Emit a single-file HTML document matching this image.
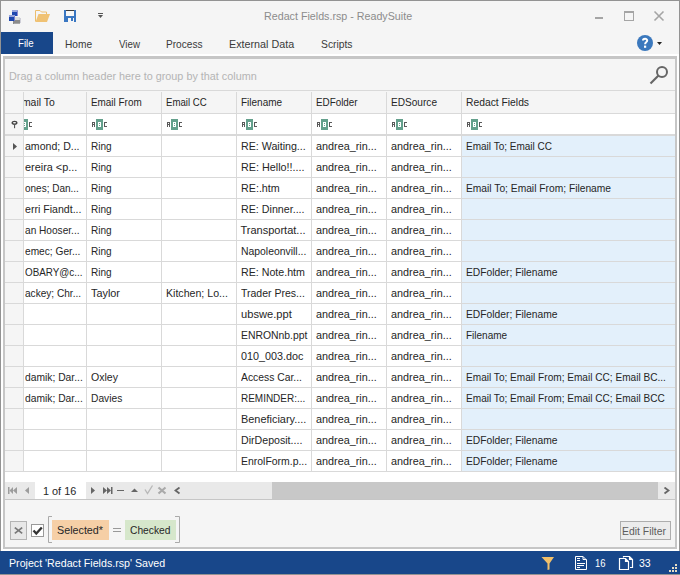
<!DOCTYPE html>
<html><head><meta charset="utf-8"><style>
*{margin:0;padding:0;box-sizing:border-box}
html,body{width:680px;height:575px;overflow:hidden;background:#f5f5f5;font-family:"Liberation Sans",sans-serif;font-size:11px;color:#262626}
.a{position:absolute;display:block}
.t{position:absolute;white-space:nowrap;line-height:13px;transform-origin:0 0}
</style></head>
<body>
<div class="a" style="left:0px;top:0px;width:680px;height:1px;background:#939393"></div>
<div class="a" style="left:0px;top:0px;width:1px;height:575px;background:#939393"></div>
<div class="a" style="left:679px;top:0px;width:1px;height:575px;background:#939393"></div>
<svg class="a" style="left:8px;top:9px" width="14" height="16" viewBox="0 0 14 16"><rect x="5" y="8" width="7" height="4" fill="#dcdcdc"/><rect x="11" y="9" width="2" height="5" fill="#cfcfd8"/><rect x="5" y="11" width="7" height="4" fill="#8c8c8c"/><rect x="6" y="14" width="6" height="1" fill="#a8a8a8"/><rect x="4" y="1" width="6" height="2" fill="#98a4dc"/><rect x="4" y="3" width="5" height="4" fill="#1f47b0"/><rect x="9" y="2" width="1" height="5" fill="#8a86d0"/><rect x="1" y="6" width="6" height="2" fill="#98a4dc"/><rect x="1" y="8" width="5" height="4" fill="#1c46ae"/><rect x="6" y="7" width="1" height="5" fill="#7c80cc"/></svg>
<svg class="a" style="left:35px;top:10px" width="16" height="13" viewBox="0 0 16 13"><path d="M0.5 11.5 V0.5 H5 L6.5 2 H11.5 V4" fill="none" stroke="#ecbd6c" stroke-width="1"/><path d="M0.5 12 L3.5 4 H15 L12 12Z" fill="#f0c274"/></svg>
<svg class="a" style="left:64px;top:10px" width="12" height="12" viewBox="0 0 12 12"><rect x="0" y="0" width="12" height="12" fill="#3a77c2"/><rect x="2" y="0" width="8" height="6" fill="#f7f7f7"/><rect x="2" y="0" width="8" height="1" fill="#3c3c3c"/><rect x="4" y="8" width="6" height="4" fill="#f7f7f7"/><rect x="7" y="8" width="2" height="3" fill="#3a77c2"/></svg>
<svg class="a" style="left:98px;top:13px" width="5" height="5" viewBox="0 0 5 5"><rect x="0" y="0" width="5" height="1" fill="#555"/><path d="M0 2 H5 L2.5 5Z" fill="#555"/></svg>
<div class="t" style="left:264px;top:10px;transform:scaleX(0.9729);color:#8c8c8c">Redact Fields.rsp - ReadySuite</div>
<div class="a" style="left:595px;top:17px;width:8px;height:2px;background:#a5a5a5"></div>
<div class="a" style="left:624px;top:11px;width:10px;height:10px;border:1px solid #a5a5a5;border-top-width:2px"></div>
<svg class="a" style="left:653px;top:10px" width="12" height="12" viewBox="0 0 12 12"><path d="M1.5 1.5 L10.5 10.5 M10.5 1.5 L1.5 10.5" stroke="#a5a5a5" stroke-width="1.6"/></svg>
<div class="a" style="left:1px;top:32px;width:52px;height:22px;background:#18478a"></div>
<div class="t" style="left:18px;top:37px;transform:scaleX(0.8803);color:#fff">File</div>
<div class="t" style="left:65px;top:38px;transform:scaleX(0.9239);color:#3a3a3a">Home</div>
<div class="t" style="left:119px;top:38px;transform:scaleX(0.8861);color:#3a3a3a">View</div>
<div class="t" style="left:166px;top:38px;transform:scaleX(0.9196);color:#3a3a3a">Process</div>
<div class="t" style="left:229px;top:38px;transform:scaleX(0.9774);color:#3a3a3a">External Data</div>
<div class="t" style="left:321px;top:38px;transform:scaleX(0.9379);color:#3a3a3a">Scripts</div>
<svg class="a" style="left:637px;top:35px" width="16" height="16" viewBox="0 0 16 16"><circle cx="8" cy="8" r="8" fill="#3b78bd"/><path d="M6 5.5 C6 3.3 10.2 3.2 10.2 5.5 C10.2 7.1 8.1 7.2 8.1 9.2" fill="none" stroke="#fff" stroke-width="2"/><rect x="7" y="10.6" width="2.2" height="2.2" fill="#fff"/></svg>
<svg class="a" style="left:657px;top:42px" width="5" height="3" viewBox="0 0 5 3"><path d="M0 0 H5 L2.5 3Z" fill="#222"/></svg>
<div class="a" style="left:1px;top:54px;width:678px;height:497px;background:#ffffff"></div>
<div class="a" style="left:3px;top:56px;width:674px;height:493px;background:#c6c6c6"></div>
<div class="a" style="left:5px;top:59px;width:670px;height:488px;background:#f5f5f5"></div>
<div class="t" style="left:9px;top:70px;transform:scaleX(0.9833);color:#b4b4b4">Drag a column header here to group by that column</div>
<svg class="a" style="left:648px;top:64px" width="22" height="22" viewBox="0 0 22 22"><circle cx="14" cy="8" r="5" fill="none" stroke="#666" stroke-width="2"/><path d="M10.5 11.5 L2.5 19.5" stroke="#666" stroke-width="2.2"/></svg>
<div class="a" style="left:5px;top:90px;width:670px;height:1px;background:#d9d9d9"></div>
<div class="a" style="left:5px;top:91px;width:670px;height:408px;overflow:hidden">
<div class="a" style="left:0px;top:0px;width:670px;height:22px;background:#f5f5f5"></div>
<div class="a" style="left:0px;top:22px;width:670px;height:1px;background:#d9d9d9"></div>
<div class="a" style="left:0px;top:23px;width:670px;height:20px;background:#fff"></div>
<div class="a" style="left:0px;top:23px;width:18px;height:20px;background:#f5f5f5"></div>
<div class="a" style="left:0px;top:43px;width:670px;height:2px;background:#d9d9d9"></div>
<div class="a" style="left:0px;top:45px;width:670px;height:346px;background:#fff"></div>
<div class="a" style="left:0px;top:45px;width:18px;height:336px;background:#f5f5f5"></div>
<div class="a" style="left:457px;top:45px;width:213px;height:336px;background:#e3f0fb"></div>
<div class="a" style="left:0px;top:65px;width:670px;height:1px;background:#d9d9d9"></div>
<div class="t" style="left:19.6px;top:49px;transform:scaleX(0.9595);">amond; D...</div>
<div class="t" style="left:85.5px;top:49px;transform:scaleX(0.9109);">Ring</div>
<div class="t" style="left:235.5px;top:49px;transform:scaleX(0.9689);">RE: Waiting...</div>
<div class="t" style="left:310.5px;top:49px;transform:scaleX(0.9837);">andrea_rin...</div>
<div class="t" style="left:385.5px;top:49px;transform:scaleX(0.9837);">andrea_rin...</div>
<div class="t" style="left:460.5px;top:49px;transform:scaleX(0.9104);">Email To; Email CC</div>
<div class="a" style="left:0px;top:86px;width:670px;height:1px;background:#d9d9d9"></div>
<div class="t" style="left:19.6px;top:70px;transform:scaleX(0.9899);">ereira &lt;p...</div>
<div class="t" style="left:85.5px;top:70px;transform:scaleX(0.9109);">Ring</div>
<div class="t" style="left:235.5px;top:70px;transform:scaleX(0.9808);">RE: Hello!!....</div>
<div class="t" style="left:310.5px;top:70px;transform:scaleX(0.9837);">andrea_rin...</div>
<div class="t" style="left:385.5px;top:70px;transform:scaleX(0.9837);">andrea_rin...</div>
<div class="a" style="left:0px;top:107px;width:670px;height:1px;background:#d9d9d9"></div>
<div class="t" style="left:19.6px;top:91px;transform:scaleX(0.9079);">ones; Dan...</div>
<div class="t" style="left:85.5px;top:91px;transform:scaleX(0.9109);">Ring</div>
<div class="t" style="left:235.5px;top:91px;transform:scaleX(0.9756);">RE:.htm</div>
<div class="t" style="left:310.5px;top:91px;transform:scaleX(0.9837);">andrea_rin...</div>
<div class="t" style="left:385.5px;top:91px;transform:scaleX(0.9837);">andrea_rin...</div>
<div class="t" style="left:460.5px;top:91px;transform:scaleX(0.9316);">Email To; Email From; Filename</div>
<div class="a" style="left:0px;top:128px;width:670px;height:1px;background:#d9d9d9"></div>
<div class="t" style="left:19.6px;top:112px;transform:scaleX(0.9620);">erri Fiandt...</div>
<div class="t" style="left:85.5px;top:112px;transform:scaleX(0.9109);">Ring</div>
<div class="t" style="left:235.5px;top:112px;transform:scaleX(0.9716);">RE: Dinner....</div>
<div class="t" style="left:310.5px;top:112px;transform:scaleX(0.9837);">andrea_rin...</div>
<div class="t" style="left:385.5px;top:112px;transform:scaleX(0.9837);">andrea_rin...</div>
<div class="a" style="left:0px;top:149px;width:670px;height:1px;background:#d9d9d9"></div>
<div class="t" style="left:19.6px;top:133px;transform:scaleX(0.9197);">an Hooser...</div>
<div class="t" style="left:85.5px;top:133px;transform:scaleX(0.9109);">Ring</div>
<div class="t" style="left:235.5px;top:133px;">Transportat...</div>
<div class="t" style="left:310.5px;top:133px;transform:scaleX(0.9837);">andrea_rin...</div>
<div class="t" style="left:385.5px;top:133px;transform:scaleX(0.9837);">andrea_rin...</div>
<div class="a" style="left:0px;top:170px;width:670px;height:1px;background:#d9d9d9"></div>
<div class="t" style="left:19.6px;top:154px;transform:scaleX(0.9239);">emec; Ger...</div>
<div class="t" style="left:85.5px;top:154px;transform:scaleX(0.9109);">Ring</div>
<div class="t" style="left:235.5px;top:154px;transform:scaleX(0.9459);">Napoleonvill...</div>
<div class="t" style="left:310.5px;top:154px;transform:scaleX(0.9837);">andrea_rin...</div>
<div class="t" style="left:385.5px;top:154px;transform:scaleX(0.9837);">andrea_rin...</div>
<div class="a" style="left:0px;top:191px;width:670px;height:1px;background:#d9d9d9"></div>
<div class="t" style="left:19.6px;top:175px;transform:scaleX(0.8956);">OBARY@c...</div>
<div class="t" style="left:85.5px;top:175px;transform:scaleX(0.9109);">Ring</div>
<div class="t" style="left:235.5px;top:175px;transform:scaleX(0.9687);">RE: Note.htm</div>
<div class="t" style="left:310.5px;top:175px;transform:scaleX(0.9837);">andrea_rin...</div>
<div class="t" style="left:385.5px;top:175px;transform:scaleX(0.9837);">andrea_rin...</div>
<div class="t" style="left:460.5px;top:175px;transform:scaleX(0.9356);">EDFolder; Filename</div>
<div class="a" style="left:0px;top:212px;width:670px;height:1px;background:#d9d9d9"></div>
<div class="t" style="left:19.6px;top:196px;transform:scaleX(0.9169);">ackey; Chr...</div>
<div class="t" style="left:85.5px;top:196px;transform:scaleX(0.9872);">Taylor</div>
<div class="t" style="left:160.5px;top:196px;transform:scaleX(0.9634);">Kitchen; Lo...</div>
<div class="t" style="left:235.5px;top:196px;transform:scaleX(0.9554);">Trader Pres...</div>
<div class="t" style="left:310.5px;top:196px;transform:scaleX(0.9837);">andrea_rin...</div>
<div class="t" style="left:385.5px;top:196px;transform:scaleX(0.9837);">andrea_rin...</div>
<div class="a" style="left:0px;top:233px;width:670px;height:1px;background:#d9d9d9"></div>
<div class="t" style="left:235.5px;top:217px;transform:scaleX(1.0122);">ubswe.ppt</div>
<div class="t" style="left:310.5px;top:217px;transform:scaleX(0.9837);">andrea_rin...</div>
<div class="t" style="left:385.5px;top:217px;transform:scaleX(0.9837);">andrea_rin...</div>
<div class="t" style="left:460.5px;top:217px;transform:scaleX(0.9356);">EDFolder; Filename</div>
<div class="a" style="left:0px;top:254px;width:670px;height:1px;background:#d9d9d9"></div>
<div class="t" style="left:235.5px;top:238px;transform:scaleX(0.9452);">ENRONnb.ppt</div>
<div class="t" style="left:310.5px;top:238px;transform:scaleX(0.9837);">andrea_rin...</div>
<div class="t" style="left:385.5px;top:238px;transform:scaleX(0.9837);">andrea_rin...</div>
<div class="t" style="left:460.5px;top:238px;transform:scaleX(0.9086);">Filename</div>
<div class="a" style="left:0px;top:275px;width:670px;height:1px;background:#d9d9d9"></div>
<div class="t" style="left:235.5px;top:259px;transform:scaleX(0.9795);">010_003.doc</div>
<div class="t" style="left:310.5px;top:259px;transform:scaleX(0.9837);">andrea_rin...</div>
<div class="t" style="left:385.5px;top:259px;transform:scaleX(0.9837);">andrea_rin...</div>
<div class="a" style="left:0px;top:296px;width:670px;height:1px;background:#d9d9d9"></div>
<div class="t" style="left:19.6px;top:280px;transform:scaleX(0.9354);">damik; Dar...</div>
<div class="t" style="left:85.5px;top:280px;transform:scaleX(0.9609);">Oxley</div>
<div class="t" style="left:235.5px;top:280px;transform:scaleX(0.9407);">Access Car...</div>
<div class="t" style="left:310.5px;top:280px;transform:scaleX(0.9837);">andrea_rin...</div>
<div class="t" style="left:385.5px;top:280px;transform:scaleX(0.9837);">andrea_rin...</div>
<div class="t" style="left:460.5px;top:280px;transform:scaleX(0.9168);">Email To; Email From; Email CC; Email BC...</div>
<div class="a" style="left:0px;top:317px;width:670px;height:1px;background:#d9d9d9"></div>
<div class="t" style="left:19.6px;top:301px;transform:scaleX(0.9354);">damik; Dar...</div>
<div class="t" style="left:85.5px;top:301px;transform:scaleX(0.9290);">Davies</div>
<div class="t" style="left:235.5px;top:301px;transform:scaleX(0.9063);">REMINDER:...</div>
<div class="t" style="left:310.5px;top:301px;transform:scaleX(0.9837);">andrea_rin...</div>
<div class="t" style="left:385.5px;top:301px;transform:scaleX(0.9837);">andrea_rin...</div>
<div class="t" style="left:460.5px;top:301px;transform:scaleX(0.9169);">Email To; Email From; Email CC; Email BCC</div>
<div class="a" style="left:0px;top:338px;width:670px;height:1px;background:#d9d9d9"></div>
<div class="t" style="left:235.5px;top:322px;transform:scaleX(0.9929);">Beneficiary....</div>
<div class="t" style="left:310.5px;top:322px;transform:scaleX(0.9837);">andrea_rin...</div>
<div class="t" style="left:385.5px;top:322px;transform:scaleX(0.9837);">andrea_rin...</div>
<div class="a" style="left:0px;top:359px;width:670px;height:1px;background:#d9d9d9"></div>
<div class="t" style="left:235.5px;top:343px;transform:scaleX(0.9651);">DirDeposit....</div>
<div class="t" style="left:310.5px;top:343px;transform:scaleX(0.9837);">andrea_rin...</div>
<div class="t" style="left:385.5px;top:343px;transform:scaleX(0.9837);">andrea_rin...</div>
<div class="t" style="left:460.5px;top:343px;transform:scaleX(0.9356);">EDFolder; Filename</div>
<div class="a" style="left:0px;top:380px;width:670px;height:1px;background:#d9d9d9"></div>
<div class="t" style="left:235.5px;top:364px;transform:scaleX(0.9493);">EnrolForm.p...</div>
<div class="t" style="left:310.5px;top:364px;transform:scaleX(0.9837);">andrea_rin...</div>
<div class="t" style="left:385.5px;top:364px;transform:scaleX(0.9837);">andrea_rin...</div>
<div class="t" style="left:460.5px;top:364px;transform:scaleX(0.9356);">EDFolder; Filename</div>
<div class="a" style="left:18px;top:1px;width:1px;height:380px;background:#d9d9d9"></div>
<div class="a" style="left:81px;top:1px;width:1px;height:380px;background:#d9d9d9"></div>
<div class="a" style="left:156px;top:1px;width:1px;height:380px;background:#d9d9d9"></div>
<div class="a" style="left:231px;top:1px;width:1px;height:380px;background:#d9d9d9"></div>
<div class="a" style="left:306px;top:1px;width:1px;height:380px;background:#d9d9d9"></div>
<div class="a" style="left:381px;top:1px;width:1px;height:380px;background:#d9d9d9"></div>
<div class="a" style="left:456px;top:1px;width:1px;height:380px;background:#d9d9d9"></div>
<div class="t" style="left:85.5px;top:5px;transform:scaleX(0.9008);">Email From</div>
<div class="t" style="left:160.5px;top:5px;transform:scaleX(0.8752);">Email CC</div>
<div class="t" style="left:235.5px;top:5px;transform:scaleX(0.9086);">Filename</div>
<div class="t" style="left:310.5px;top:5px;transform:scaleX(0.8954);">EDFolder</div>
<div class="t" style="left:385.5px;top:5px;transform:scaleX(0.9177);">EDSource</div>
<div class="t" style="left:460.5px;top:5px;transform:scaleX(0.9372);">Redact Fields</div>
<svg class="a" style="left:86px;top:27px" width="17" height="12" viewBox="0 0 17 12"><path d="M1 4h3v1h-3zM1 5h1v4h-1zM3 5h1v4h-1zM1 6h3v1h-3z" fill="#5a5a5a" transform="translate(0,0)"/><rect x="5" y="1" width="7" height="11" fill="#64a08c"/><rect x="7" y="4" width="3" height="5" fill="#fff"/><rect x="8" y="5" width="1" height="1" fill="#64a08c"/><rect x="8" y="7" width="1" height="1" fill="#64a08c"/><path d="M13 4h3v1h-3zM13 5h1v3h-1zM13 8h3v1h-3z" fill="#5a5a5a"/></svg>
<svg class="a" style="left:161px;top:27px" width="17" height="12" viewBox="0 0 17 12"><path d="M1 4h3v1h-3zM1 5h1v4h-1zM3 5h1v4h-1zM1 6h3v1h-3z" fill="#5a5a5a" transform="translate(0,0)"/><rect x="5" y="1" width="7" height="11" fill="#64a08c"/><rect x="7" y="4" width="3" height="5" fill="#fff"/><rect x="8" y="5" width="1" height="1" fill="#64a08c"/><rect x="8" y="7" width="1" height="1" fill="#64a08c"/><path d="M13 4h3v1h-3zM13 5h1v3h-1zM13 8h3v1h-3z" fill="#5a5a5a"/></svg>
<svg class="a" style="left:236px;top:27px" width="17" height="12" viewBox="0 0 17 12"><path d="M1 4h3v1h-3zM1 5h1v4h-1zM3 5h1v4h-1zM1 6h3v1h-3z" fill="#5a5a5a" transform="translate(0,0)"/><rect x="5" y="1" width="7" height="11" fill="#64a08c"/><rect x="7" y="4" width="3" height="5" fill="#fff"/><rect x="8" y="5" width="1" height="1" fill="#64a08c"/><rect x="8" y="7" width="1" height="1" fill="#64a08c"/><path d="M13 4h3v1h-3zM13 5h1v3h-1zM13 8h3v1h-3z" fill="#5a5a5a"/></svg>
<svg class="a" style="left:311px;top:27px" width="17" height="12" viewBox="0 0 17 12"><path d="M1 4h3v1h-3zM1 5h1v4h-1zM3 5h1v4h-1zM1 6h3v1h-3z" fill="#5a5a5a" transform="translate(0,0)"/><rect x="5" y="1" width="7" height="11" fill="#64a08c"/><rect x="7" y="4" width="3" height="5" fill="#fff"/><rect x="8" y="5" width="1" height="1" fill="#64a08c"/><rect x="8" y="7" width="1" height="1" fill="#64a08c"/><path d="M13 4h3v1h-3zM13 5h1v3h-1zM13 8h3v1h-3z" fill="#5a5a5a"/></svg>
<svg class="a" style="left:386px;top:27px" width="17" height="12" viewBox="0 0 17 12"><path d="M1 4h3v1h-3zM1 5h1v4h-1zM3 5h1v4h-1zM1 6h3v1h-3z" fill="#5a5a5a" transform="translate(0,0)"/><rect x="5" y="1" width="7" height="11" fill="#64a08c"/><rect x="7" y="4" width="3" height="5" fill="#fff"/><rect x="8" y="5" width="1" height="1" fill="#64a08c"/><rect x="8" y="7" width="1" height="1" fill="#64a08c"/><path d="M13 4h3v1h-3zM13 5h1v3h-1zM13 8h3v1h-3z" fill="#5a5a5a"/></svg>
<svg class="a" style="left:461px;top:27px" width="17" height="12" viewBox="0 0 17 12"><path d="M1 4h3v1h-3zM1 5h1v4h-1zM3 5h1v4h-1zM1 6h3v1h-3z" fill="#5a5a5a" transform="translate(0,0)"/><rect x="5" y="1" width="7" height="11" fill="#64a08c"/><rect x="7" y="4" width="3" height="5" fill="#fff"/><rect x="8" y="5" width="1" height="1" fill="#64a08c"/><rect x="8" y="7" width="1" height="1" fill="#64a08c"/><path d="M13 4h3v1h-3zM13 5h1v3h-1zM13 8h3v1h-3z" fill="#5a5a5a"/></svg>
<div class="a" style="left:19px;top:0px;width:62px;height:45px;overflow:hidden">
<div class="t" style="left:-9px;top:5px;transform:scaleX(0.9469);">Email To</div>
<svg class="a" style="left:-8px;top:27px" width="17" height="12" viewBox="0 0 17 12"><path d="M1 4h3v1h-3zM1 5h1v4h-1zM3 5h1v4h-1zM1 6h3v1h-3z" fill="#5a5a5a" transform="translate(0,0)"/><rect x="5" y="1" width="7" height="11" fill="#64a08c"/><rect x="7" y="4" width="3" height="5" fill="#fff"/><rect x="8" y="5" width="1" height="1" fill="#64a08c"/><rect x="8" y="7" width="1" height="1" fill="#64a08c"/><path d="M13 4h3v1h-3zM13 5h1v3h-1zM13 8h3v1h-3z" fill="#5a5a5a"/></svg>
</div>
<svg class="a" style="left:8px;top:52px" width="5" height="8" viewBox="0 0 5 8"><path d="M0 0 L4 3.5 L0 7z" fill="#555"/></svg>
<svg class="a" style="left:6px;top:29px" width="7" height="10" viewBox="0 0 7 10"><ellipse cx="3.5" cy="2.8" rx="2.3" ry="1.4" fill="none" stroke="#444" stroke-width="1.4"/><rect x="3" y="4" width="1.1" height="4.2" fill="#555"/></svg>
<div class="a" style="left:0px;top:391px;width:670px;height:17px;background:#e9e9e9"></div>
<div class="a" style="left:30px;top:391px;width:51px;height:17px;background:#fff"></div>
<div class="a" style="left:267px;top:391px;width:386px;height:17px;background:#c8c8c8"></div>
<div class="t" style="left:38px;top:394px;transform:scaleX(0.9874);">1 of 16</div>
<svg class="a" style="left:3px;top:396px" width="12" height="8" viewBox="0 0 12 8"><rect x="0" y="0" width="1.5" height="7" fill="#9c9c9c"/><path d="M1.5 3.5 L5 0 V7Z M5 3.5 L9 0 V7Z" fill="#9c9c9c"/></svg>
<svg class="a" style="left:19px;top:396px" width="6" height="8" viewBox="0 0 6 8"><path d="M5 0 V7 L1 3.5Z" fill="#9c9c9c"/></svg>
<svg class="a" style="left:86px;top:396px" width="5" height="8" viewBox="0 0 5 8"><path d="M0 0 V7 L4 3.5Z" fill="#666666"/></svg>
<svg class="a" style="left:98px;top:396px" width="11" height="8" viewBox="0 0 11 8"><path d="M0 0 V7 L4 3.5Z M4 0 V7 L8 3.5Z" fill="#666666"/><rect x="8" y="0" width="1.5" height="7" fill="#666666"/></svg>
<div class="a" style="left:112px;top:399px;width:7px;height:1px;background:#666666"></div>
<svg class="a" style="left:126px;top:397px" width="7" height="4" viewBox="0 0 7 4"><path d="M0 4 H7 L3.5 0.5Z" fill="#666666"/></svg>
<svg class="a" style="left:139px;top:394px" width="10" height="10" viewBox="0 0 10 10"><path d="M1 4.5 L3.5 8.5 L8.5 0.5" fill="none" stroke="#b8b8b8" stroke-width="1.4"/></svg>
<svg class="a" style="left:152px;top:395px" width="11" height="9" viewBox="0 0 11 9"><path d="M1.5 1.5 L8.5 7.5 M8.5 1.5 L1.5 7.5" stroke="#aaaaaa" stroke-width="2.2"/></svg>
<svg class="a" style="left:169px;top:396px" width="7" height="8" viewBox="0 0 7 8"><path d="M5.5 0.5 L1.5 3.5 L5.5 6.5" fill="none" stroke="#666666" stroke-width="1.8"/></svg>
<svg class="a" style="left:658px;top:396px" width="8" height="8" viewBox="0 0 8 8"><path d="M1.5 0.5 L5.5 3.5 L1.5 6.5" fill="none" stroke="#666666" stroke-width="1.8"/></svg>
</div>
<div class="a" style="left:5px;top:499px;width:670px;height:1px;background:#c6c6c6"></div>
<div class="a" style="left:10px;top:521px;width:17px;height:19px;background:#e8e8e8;border:1px solid #b4b4b4"></div>
<svg class="a" style="left:14px;top:527px" width="9" height="8" viewBox="0 0 9 8"><path d="M0.8 0.6 L8.2 6.4 M8.2 0.6 L0.8 6.4" stroke="#7a7a7a" stroke-width="1.7"/></svg>
<div class="a" style="left:31px;top:524px;width:13px;height:13px;background:#fff;border:1px solid #9a9a9a"></div>
<svg class="a" style="left:32px;top:526px" width="11" height="10" viewBox="0 0 11 10"><path d="M1.5 4.5 L4.3 7.6 L9.8 1.5" fill="none" stroke="#333" stroke-width="2.3"/></svg>
<svg class="a" style="left:47px;top:516px" width="6" height="27" viewBox="0 0 6 27"><path d="M5 0.5 H1.5 V26.5 H5" fill="none" stroke="#aaa" stroke-width="1"/></svg>
<div class="a" style="left:52px;top:520px;width:57px;height:20px;background:#f6cfa6"></div>
<div class="t" style="left:57px;top:524px;transform:scaleX(0.9768);">Selected*</div>
<div class="a" style="left:113px;top:528px;width:8px;height:1px;background:#999"></div>
<div class="a" style="left:113px;top:531px;width:8px;height:1px;background:#999"></div>
<div class="a" style="left:125px;top:520px;width:51px;height:20px;background:#d6e7cb"></div>
<div class="t" style="left:130px;top:524px;transform:scaleX(0.9331);">Checked</div>
<svg class="a" style="left:175px;top:516px" width="6" height="27" viewBox="0 0 6 27"><path d="M0 0.5 H4.5 V26.5 H0" fill="none" stroke="#aaa" stroke-width="1"/></svg>
<div class="a" style="left:620px;top:521px;width:51px;height:19px;background:#ececec;border:1px solid #adadad"></div>
<div class="t" style="left:622px;top:525px;transform:scaleX(0.9446);color:#5c5c5c">Edit Filter</div>
<div class="a" style="left:1px;top:549px;width:678px;height:2px;background:#fff"></div>
<div class="a" style="left:0px;top:551px;width:680px;height:23px;background:#18478a"></div>
<div class="a" style="left:0px;top:574px;width:680px;height:1px;background:#939393"></div>
<div class="t" style="left:9px;top:557px;transform:scaleX(0.9677);color:#fff">Project 'Redact Fields.rsp' Saved</div>
<svg class="a" style="left:541px;top:556px" width="14" height="15" viewBox="0 0 14 15"><path d="M0.5 1 H13 L8.5 7.5 V13.5 L6.5 14 V7.5Z" fill="#f2c06a"/></svg>
<svg class="a" style="left:575px;top:556px" width="12" height="14" viewBox="0 0 12 14"><path d="M0.5 0.5 H8 L11.5 4 V13.5 H0.5Z M8 0.5 V3.5 H11.5" fill="none" stroke="#fff" stroke-width="1"/><rect x="2" y="2" width="3" height="1" fill="#fff"/><rect x="2" y="4" width="3" height="1" fill="#fff"/><rect x="2" y="7" width="8" height="1" fill="#fff"/><rect x="2" y="9" width="7" height="1" fill="#fff"/><rect x="2" y="11" width="3" height="1" fill="#fff"/></svg>
<div class="t" style="left:595px;top:557px;transform:scaleX(0.8583);color:#fff">16</div>
<svg class="a" style="left:618px;top:555px" width="17" height="16" viewBox="0 0 17 16"><path d="M5.5 2.5 V1.5 H11.5 L14.5 4.5 V12.5 H12 M11.5 1.5 V4.5 H14.5" fill="none" stroke="#fff" stroke-width="1.2"/><path d="M1.5 3.5 H7.5 L10.5 6.5 V14.5 H1.5Z M7.5 3.5 V6.5 H10.5" fill="none" stroke="#fff" stroke-width="1.2"/></svg>
<div class="t" style="left:639px;top:557px;transform:scaleX(0.9573);color:#fff">33</div>
<div class="a" style="left:675px;top:564px;width:2px;height:2px;background:#e6dcc4"></div>
<div class="a" style="left:672px;top:567px;width:2px;height:2px;background:#e6dcc4"></div>
<div class="a" style="left:675px;top:567px;width:2px;height:2px;background:#e6dcc4"></div>
<div class="a" style="left:669px;top:570px;width:2px;height:2px;background:#e6dcc4"></div>
<div class="a" style="left:672px;top:570px;width:2px;height:2px;background:#e6dcc4"></div>
<div class="a" style="left:675px;top:570px;width:2px;height:2px;background:#e6dcc4"></div>
</body></html>
